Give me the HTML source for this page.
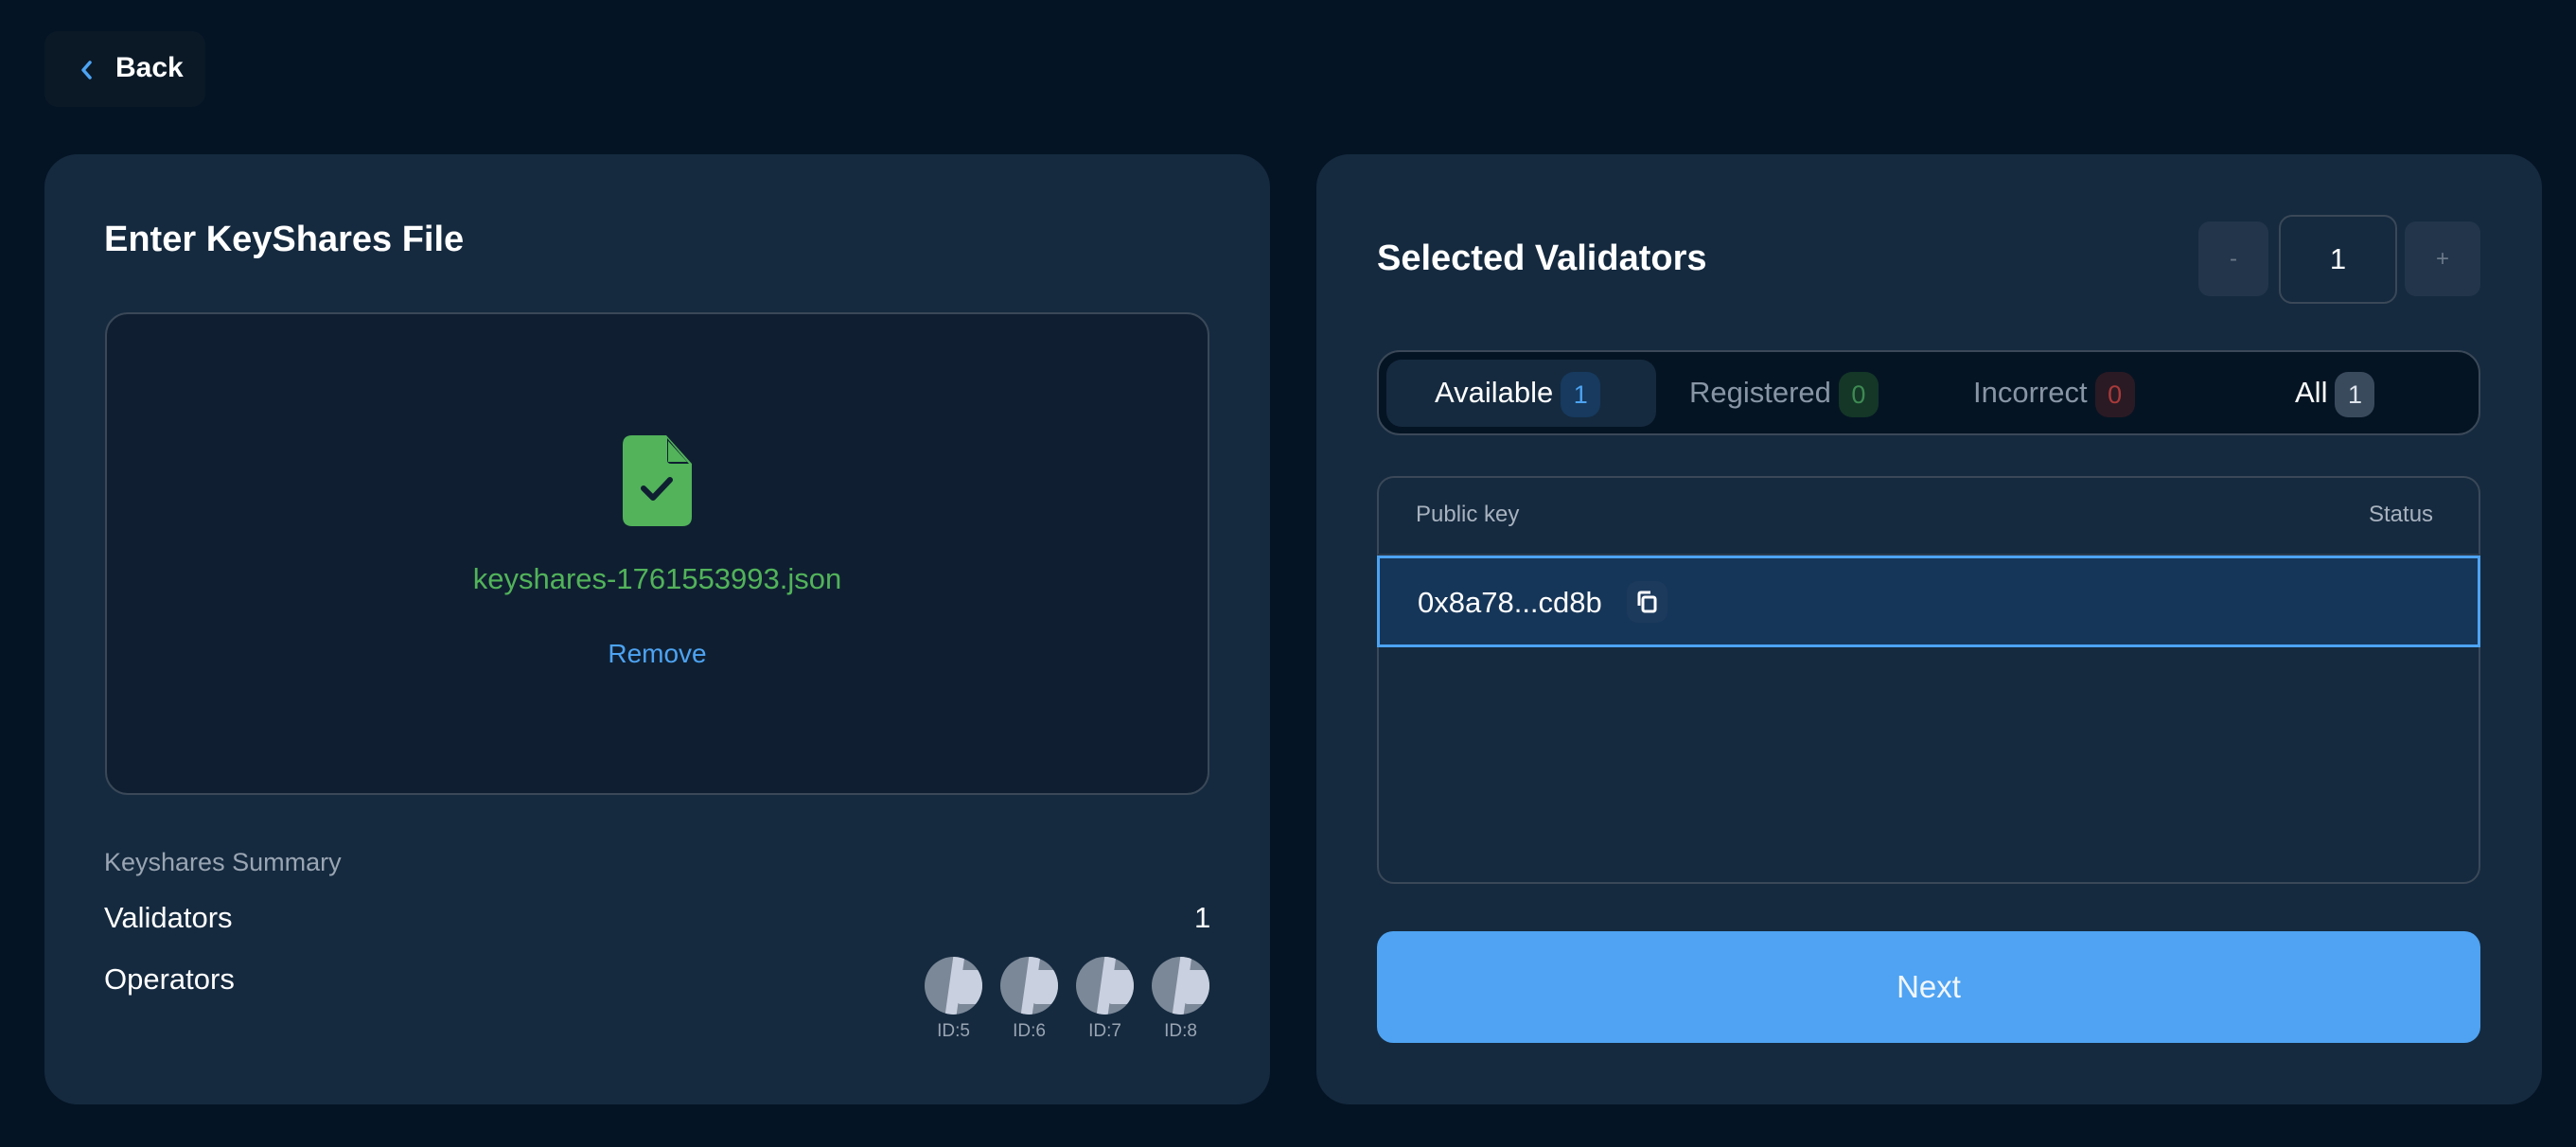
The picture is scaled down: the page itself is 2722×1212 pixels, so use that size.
<!DOCTYPE html>
<html><head><meta charset="utf-8"><style>
*{margin:0;padding:0;box-sizing:border-box}
body{width:2722px;height:1212px;background:#041424;font-family:"Liberation Sans",sans-serif;color:#fff;position:relative;overflow:hidden}
.abs{position:absolute}
.back{left:47px;top:33px;width:170px;height:80px;background:#0b1927;border-radius:14px}
.card{background:#152a3f;border-radius:35px}
.t{white-space:nowrap}
.badge{display:inline-block;width:42px;height:48px;border-radius:14px;text-align:center;line-height:48px;font-size:27px;vertical-align:middle;margin-left:8px}
.tab{position:absolute;top:0;height:90px;line-height:90px;font-size:31px}
.av{position:absolute;top:1011px;width:61px;height:61px;border-radius:50%;background:#7b8898;overflow:hidden}
.lbl{position:absolute;top:1079px;width:61px;text-align:center;font-size:19px;color:#9aa5b3}
</style></head><body>
<div class="abs back"></div>
<svg class="abs" style="left:84px;top:63px" width="16" height="22" viewBox="0 0 16 22"><path d="M11 3 L4 11 L11 19" stroke="#4da3f2" stroke-width="3.5" fill="none" stroke-linecap="round" stroke-linejoin="round"/></svg>
<div class="abs t" style="left:122px;top:55px;font-size:30px;font-weight:bold">Back</div>

<div class="abs card" style="left:47px;top:163px;width:1295px;height:1004px"></div>
<div class="abs t" style="left:110px;top:232px;font-size:38px;font-weight:bold">Enter KeyShares File</div>
<div class="abs" style="left:111px;top:330px;width:1167px;height:510px;background:#0f1f31;border:2px solid #3a4858;border-radius:24px"></div>
<svg class="abs" style="left:658px;top:460px" width="73" height="96" viewBox="0 0 73 96"><path d="M10 0 H46 L73 30 V86 Q73 96 63 96 H10 Q0 96 0 86 V10 Q0 0 10 0Z" fill="#52b35a"/><path d="M47 3 L47 26 Q47 30 51 30 L70 30" fill="#0f1f31"/><path d="M48 6 L68 28 L48 28Z" fill="#52b35a"/><path d="M22 56 L32 66 L50 47" stroke="#0f1f31" stroke-width="6" fill="none" stroke-linecap="round" stroke-linejoin="round"/></svg>
<div class="abs t" style="left:111px;width:1167px;text-align:center;top:594px;font-size:31px;color:#52b35a">keyshares-1761553993.json</div>
<div class="abs t" style="left:111px;width:1167px;text-align:center;top:675px;font-size:28px;color:#4da3f2">Remove</div>
<div class="abs t" style="left:110px;top:896px;font-size:27px;color:#9aa5b3">Keyshares Summary</div>
<div class="abs t" style="left:110px;top:952px;font-size:31px">Validators</div>
<div class="abs t" style="left:1262px;top:952px;font-size:31px">1</div>
<div class="abs t" style="left:110px;top:1017px;font-size:31px">Operators</div>
<div class="av" style="left:977px"><div class="abs" style="left:26px;top:0;width:12px;height:61px;background:#c9d0e0;transform:skewX(-8deg)"></div><div class="abs" style="left:34px;top:14px;width:30px;height:36px;background:#c9d0e0;border-radius:4px"></div></div>
<div class="av" style="left:1057px"><div class="abs" style="left:26px;top:0;width:12px;height:61px;background:#c9d0e0;transform:skewX(-8deg)"></div><div class="abs" style="left:34px;top:14px;width:30px;height:36px;background:#c9d0e0;border-radius:4px"></div></div>
<div class="av" style="left:1137px"><div class="abs" style="left:26px;top:0;width:12px;height:61px;background:#c9d0e0;transform:skewX(-8deg)"></div><div class="abs" style="left:34px;top:14px;width:30px;height:36px;background:#c9d0e0;border-radius:4px"></div></div>
<div class="av" style="left:1217px"><div class="abs" style="left:26px;top:0;width:12px;height:61px;background:#c9d0e0;transform:skewX(-8deg)"></div><div class="abs" style="left:34px;top:14px;width:30px;height:36px;background:#c9d0e0;border-radius:4px"></div></div>
<div class="lbl" style="left:977px">ID:5</div><div class="lbl" style="left:1057px">ID:6</div><div class="lbl" style="left:1137px">ID:7</div><div class="lbl" style="left:1217px">ID:8</div>

<div class="abs card" style="left:1391px;top:163px;width:1295px;height:1004px"></div>
<div class="abs t" style="left:1455px;top:252px;font-size:38px;font-weight:bold">Selected Validators</div>
<div class="abs" style="left:2323px;top:234px;width:74px;height:79px;background:#22354a;border-radius:12px;text-align:center;line-height:79px;font-size:24px;color:#6b7889">-</div>
<div class="abs" style="left:2408px;top:227px;width:125px;height:94px;border:2px solid #3a4858;border-radius:14px;text-align:center;line-height:90px;font-size:31px">1</div>
<div class="abs" style="left:2541px;top:234px;width:80px;height:79px;background:#22354a;border-radius:12px;text-align:center;line-height:79px;font-size:24px;color:#6b7889">+</div>

<div class="abs" style="left:1455px;top:370px;width:1166px;height:90px;background:#051423;border:2px solid #3a4858;border-radius:24px"></div>
<div class="abs" style="left:1465px;top:380px;width:285px;height:71px;background:#152a3f;border-radius:16px"></div>
<div class="abs" style="left:1455px;top:370px;width:1166px;height:90px">
<div class="tab t" style="left:61px">Available<span class="badge" style="background:#173a5e;color:#4da3f2">1</span></div>
<div class="tab t" style="left:330px;color:#8795a5">Registered<span class="badge" style="background:#143728;color:#3e8a52">0</span></div>
<div class="tab t" style="left:630px;color:#8795a5">Incorrect<span class="badge" style="background:#2a1a24;color:#a83a3a">0</span></div>
<div class="tab t" style="left:970px">All<span class="badge" style="background:#3a4a5d;color:#dde3ea">1</span></div>
</div>

<div class="abs" style="left:1455px;top:503px;width:1166px;height:431px;border:2px solid #3a4858;border-radius:18px"></div>
<div class="abs t" style="left:1496px;top:530px;font-size:24px;color:#a8b2bf">Public key</div>
<div class="abs t" style="left:2503px;top:530px;font-size:24px;color:#a8b2bf">Status</div>
<div class="abs" style="left:1456px;top:585px;width:1164px;height:2px;background:#2a3a4c"></div>
<div class="abs" style="left:1455px;top:587px;width:1166px;height:97px;background:#163659;border:3px solid #4da3f2"></div>
<div class="abs t" style="left:1498px;top:619px;font-size:31px">0x8a78...cd8b</div>
<div class="abs" style="left:1719px;top:614px;width:43px;height:44px;background:#1c3a5c;border-radius:12px"></div>
<svg class="abs" style="left:1727px;top:622px" width="28" height="28" viewBox="0 0 28 28"><rect x="9" y="9" width="13" height="15" rx="2" fill="none" stroke="#fff" stroke-width="3"/><path d="M5 18 V6 Q5 4 7 4 H17" fill="none" stroke="#fff" stroke-width="3"/></svg>

<div class="abs" style="left:1455px;top:984px;width:1166px;height:118px;background:#4fa3f2;border-radius:17px;text-align:center;line-height:118px;font-size:33px;color:#f1f6fc">Next</div>
</body></html>
